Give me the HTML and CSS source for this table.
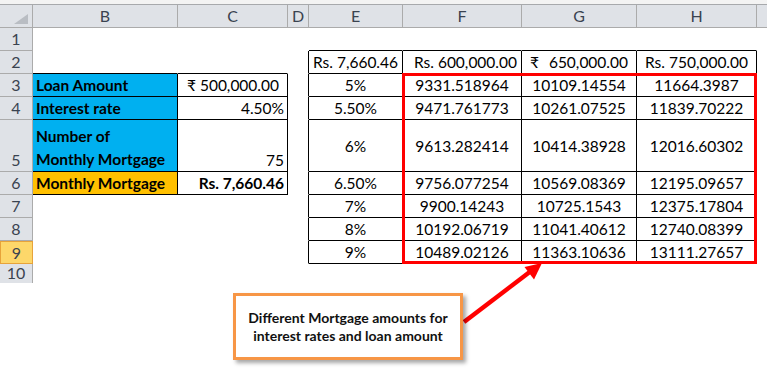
FILE: index.html
```html
<!DOCTYPE html>
<html>
<head>
<meta charset="utf-8">
<link rel="stylesheet" href="styles.css">
</head>
<body>
<div class="page">
  <div class="strip"></div>
  <div class="sheet">
    <!-- header -->
    <div class="h corner"><svg class="tri" width="14" height="10" viewBox="0 0 14 10"><polygon points="14,0 14,10 0,10" fill="#b9bdc3"/></svg></div>
    <div class="h">B</div><div class="h">C</div><div class="h">D</div><div class="h">E</div><div class="h">F</div><div class="h">G</div><div class="h">H</div><div class="h last"></div>
    <!-- row 1 -->
    <div class="rh">1</div><div class="c"></div><div class="c"></div><div class="c"></div><div class="c bb"></div><div class="c bb"></div><div class="c bb"></div><div class="c bb"></div><div class="c"></div>
    <!-- row 2 -->
    <div class="rh">2</div><div class="c bb"></div><div class="c bb"></div><div class="c br"></div>
    <div class="c br bb ctr">Rs. 7,660.46</div>
    <div class="c br bb rt pr4">Rs. 600,000.00</div>
    <div class="c br bb acct"><span>₹</span><span>650,000.00</span></div>
    <div class="c br bb ctr">Rs. 750,000.00</div>
    <div class="c"></div>
    <!-- row 3 -->
    <div class="rh">3</div>
    <div class="c br bb blue b">Loan Amount</div>
    <div class="c br bb acct2"><span>₹ 500,000.00</span></div>
    <div class="c br"></div>
    <div class="c br bb ctr">5%</div><div class="c br bb ctr">9331.518964</div><div class="c br bb ctr">10109.14554</div><div class="c br bb ctr">11664.3987</div><div class="c"></div>
    <!-- row 4 -->
    <div class="rh">4</div>
    <div class="c br bb blue b">Interest rate</div>
    <div class="c br bb rt">4.50%</div>
    <div class="c br"></div>
    <div class="c br bb ctr">5.50%</div><div class="c br bb ctr">9471.761773</div><div class="c br bb ctr">10261.07525</div><div class="c br bb ctr">11839.70222</div><div class="c"></div>
    <!-- row 5 -->
    <div class="rh tall">5</div>
    <div class="c br bb blue b wrap">Number of<br>Monthly Mortgage</div>
    <div class="c br bb rt">75</div>
    <div class="c br"></div>
    <div class="c br bb ctr mid">6%</div><div class="c br bb ctr mid">9613.282414</div><div class="c br bb ctr mid">10414.38928</div><div class="c br bb ctr mid">12016.60302</div><div class="c"></div>
    <!-- row 6 -->
    <div class="rh">6</div>
    <div class="c br bb orange b">Monthly Mortgage</div>
    <div class="c br bb rt b">Rs. 7,660.46</div>
    <div class="c br"></div>
    <div class="c br bb ctr">6.50%</div><div class="c br bb ctr">9756.077254</div><div class="c br bb ctr">10569.08369</div><div class="c br bb ctr">12195.09657</div><div class="c"></div>
    <!-- row 7 -->
    <div class="rh">7</div><div class="c"></div><div class="c"></div><div class="c br"></div>
    <div class="c br bb ctr">7%</div><div class="c br bb ctr">9900.14243</div><div class="c br bb ctr">10725.1543</div><div class="c br bb ctr">12375.17804</div><div class="c"></div>
    <!-- row 8 -->
    <div class="rh">8</div><div class="c"></div><div class="c"></div><div class="c br"></div>
    <div class="c br bb ctr">8%</div><div class="c br bb ctr">10192.06719</div><div class="c br bb ctr">11041.40612</div><div class="c br bb ctr">12740.08399</div><div class="c"></div>
    <!-- row 9 -->
    <div class="rh sel">9</div><div class="c"></div><div class="c"></div><div class="c br"></div>
    <div class="c br bb ctr">9%</div><div class="c br bb ctr">10489.02126</div><div class="c br bb ctr">11363.10636</div><div class="c br bb ctr">13111.27657</div><div class="c"></div>
    <!-- row 10 -->
    <div class="rh r10">10</div><div class="c"></div><div class="c"></div><div class="c"></div><div class="c"></div><div class="c"></div><div class="c"></div><div class="c"></div><div class="c"></div>

    <div class="redbox"></div>
  </div>

  <svg class="arrow" width="767" height="369" viewBox="0 0 767 369">
    <line x1="464" y1="322" x2="531" y2="271" stroke="#ff0000" stroke-width="4.5"/>
    <polygon points="542,263 524.5,267 534,279.5" fill="#ff0000"/>
  </svg>
  <div class="callout">
    <p>Different Mortgage amounts for<br>interest rates and loan amount</p>
  </div>
</div>
</body>
</html>
```

FILE: styles.css
```css
* { box-sizing: border-box; }
html, body { margin: 0; padding: 0; background: #ffffff; }
.page {
  position: relative;
  width: 767px;
  height: 369px;
  overflow: hidden;
  font-family: Lato, "Open Sans", sans-serif;
  font-size: 15.5px;
  color: #000;
}
.strip {
  height: 5px;
  background: #f3f3f3;
  border-bottom: 1px solid #a7a9ac;
}
.sheet {
  position: relative;
  display: grid;
  grid-template-columns: 33px 145px 110px 21px 94px 119px 115px 120px 1fr;
  grid-template-rows: 23px 23px 23px 23px 23px 52px 23px 23px 23px 23px 19px;
  height: 278px;
  overflow: hidden;
}
.h, .rh {
  background: #dfe2e7;
  border-right: 1px solid #ababab;
  border-bottom: 1px solid #ababab;
  color: #3a4350;
  display: flex;
  align-items: center;
  justify-content: center;
  font-size: 16px;
  line-height: 22px;
}
.rh.r10 { border-bottom: none; align-items: flex-start; line-height: 18px; }
.h.last { border-right: none; }
.corner { position: relative; }
.tri { position: absolute; right: 4px; bottom: 3px; }
.rh.tall { align-items: flex-end; padding-bottom: 0; }
.rh.sel {
  background: #fdd76a;
  border: 1px solid #e7a33a;
}
.c {
  border-right: 1px solid transparent;
  border-bottom: 1px solid transparent;
  display: flex;
  align-items: flex-end;
  padding: 0 3px 0 3px;
  line-height: 22px;
  white-space: nowrap;
  overflow: visible;
}
.c.br { border-right-color: #000; }
.c.bb { border-bottom-color: #000; }
.ctr { justify-content: center; }
.rt { justify-content: flex-end; }
.pr4 { padding-right: 4px; }
.mid { align-items: center; }
.b { font-weight: 700; }
.blue { background: #00b0f0; }
.orange { background: #ffc000; }
.wrap { white-space: normal; line-height: 23px; }
.acct { justify-content: space-between; padding: 0 8px 0 8px; }
.acct2 { justify-content: flex-end; padding-right: 8px; }
.redbox {
  position: absolute;
  grid-column: 6 / 9;
  grid-row: 4 / 11;
  top: -1px;
  left: -1px;
  right: 0;
  bottom: 0;
  border: 3px solid #ff0000;
  pointer-events: none;
}
.arrow {
  position: absolute;
  left: 0;
  top: 0;
}
.callout {
  position: absolute;
  left: 233px;
  top: 293px;
  width: 230px;
  height: 67px;
  background: #ffffff;
  border: 3px solid #f79646;
  box-shadow: 3px 3px 4px rgba(0, 0, 0, 0.35);
  display: flex;
  align-items: center;
  justify-content: center;
}
.callout p {
  margin: 0;
  text-align: center;
  font-weight: 700;
  font-size: 14px;
  line-height: 18px;
  color: #111;
}
```
